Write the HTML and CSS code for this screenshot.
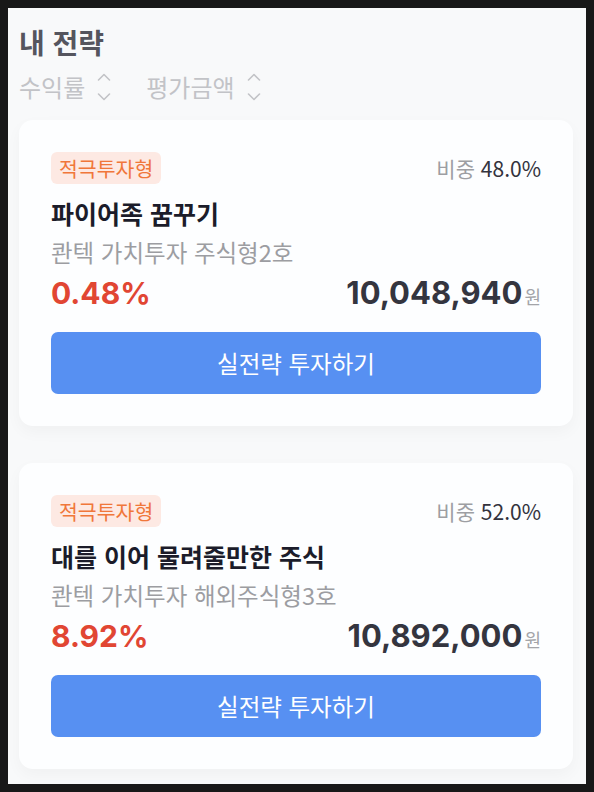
FILE: index.html
```html
<!DOCTYPE html>
<html lang="ko">
<head>
<meta charset="utf-8">
<title>내 전략</title>
<link rel="stylesheet" href="styles.css">
</head>
<body>
<div class="screen">
  <h1 class="page-title">내 전략</h1>
  <div class="sort-row">
    <span class="sort-item">수익률
      <svg class="chev" width="14" height="30" viewBox="0 0 14 30"><path d="M1.5 8 L7 2.5 L12.5 8" /><path d="M1.5 22 L7 27.5 L12.5 22" /></svg>
    </span>
    <span class="sort-item">평가금액
      <svg class="chev" width="14" height="30" viewBox="0 0 14 30"><path d="M1.5 8 L7 2.5 L12.5 8" /><path d="M1.5 22 L7 27.5 L12.5 22" /></svg>
    </span>
  </div>

  <div class="card">
    <div class="card-top">
      <span class="badge">적극투자형</span>
      <span class="weight"><span class="weight-label">비중</span> 48.0%</span>
    </div>
    <div class="card-title">파이어족 꿈꾸기</div>
    <div class="card-sub">콴텍 가치투자 주식형2호</div>
    <div class="card-row">
      <span class="rate">0.48%</span>
      <span class="amount">10,048,940<span class="won">원</span></span>
    </div>
    <button class="invest-btn">실전략 투자하기</button>
  </div>

  <div class="card">
    <div class="card-top">
      <span class="badge">적극투자형</span>
      <span class="weight"><span class="weight-label">비중</span> 52.0%</span>
    </div>
    <div class="card-title">대를 이어 물려줄만한 주식</div>
    <div class="card-sub">콴텍 가치투자 해외주식형3호</div>
    <div class="card-row">
      <span class="rate">8.92%</span>
      <span class="amount">10,892,000<span class="won">원</span></span>
    </div>
    <button class="invest-btn">실전략 투자하기</button>
  </div>
</div>
</body>
</html>
```

FILE: styles.css
```css
html {
  background: #181818;
}
body {
  margin: 8px;
  font-family: "Noto Sans CJK KR", "Noto Sans", sans-serif;
}
.screen {
  width: 578px;
  height: 776px;
  overflow: hidden;
  background: #f8f9fa;
  box-sizing: border-box;
  padding: 16px 13px 0 11px;
}
.page-title {
  margin: 0;
  font-size: 28px;
  line-height: 36px;
  font-weight: 700;
  color: #55555e;
}
.sort-row {
  display: flex;
  gap: 35px;
  margin-top: 12px;
  height: 30px;
  align-items: center;
}
.sort-item {
  display: flex;
  align-items: center;
  gap: 12px;
  font-size: 24px;
  line-height: 30px;
  color: #c2c3c7;
}
.chev {
  fill: none;
  stroke: #c2c3c7;
  stroke-width: 1.6;
  stroke-linecap: round;
  stroke-linejoin: round;
}
.card {
  margin-top: 18px;
  width: 554px;
  box-sizing: border-box;
  background: #fdfeff;
  border-radius: 14px;
  padding: 32px;
  box-shadow: 0 6px 16px rgba(0, 0, 0, 0.035);
}
.card + .card {
  margin-top: 37px;
}
.card-top {
  display: flex;
  justify-content: space-between;
  align-items: center;
  height: 32px;
}
.badge {
  display: inline-flex;
  align-items: center;
  height: 32px;
  padding: 0 8px;
  border-radius: 6px;
  background: #fde9e3;
  color: #f0773a;
  font-size: 20.5px;
}
.weight {
  font-size: 21px;
  color: #33333d;
}
.weight-label {
  color: #9d9ea3;
}
.card-title {
  margin-top: 12px;
  font-size: 25px;
  line-height: 34px;
  font-weight: 700;
  color: #1b1c2a;
}
.card-sub {
  margin-top: 6px;
  font-size: 23.5px;
  line-height: 32px;
  color: #9c9da2;
}
.card-row {
  margin-top: 6px;
  height: 38px;
  display: flex;
  justify-content: space-between;
  align-items: baseline;
}
.rate {
  font-size: 30px;
  line-height: 38px;
  font-weight: 700;
  color: #e14633;
  font-family: "Inter", "Noto Sans", sans-serif;
}
.amount {
  font-size: 31px;
  line-height: 38px;
  font-weight: 700;
  color: #34353f;
  font-family: "Inter", "Noto Sans", sans-serif;
}
.won {
  font-family: "Noto Sans CJK KR", sans-serif;
  font-size: 18px;
  font-weight: 400;
  color: #a3a4a8;
  margin-left: 2px;
}
.invest-btn {
  display: block;
  width: 100%;
  height: 62px;
  margin-top: 20px;
  border: none;
  border-radius: 7px;
  background: #5790f2;
  color: #ffffff;
  font-family: "Noto Sans CJK KR", sans-serif;
  font-size: 23.5px;
  font-weight: 400;
}
```
